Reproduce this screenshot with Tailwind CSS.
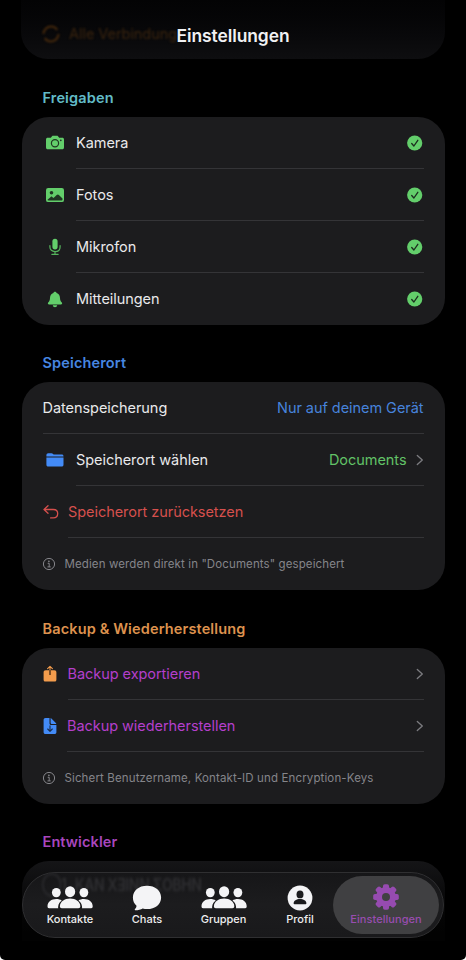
<!DOCTYPE html>
<html lang="de">
<head>
<meta charset="utf-8">
<title>Einstellungen</title>
<script src="https://cdn.jsdelivr.net/npm/@tailwindcss/browser@4"></script>
</head>
<body class="bg-white">
<svg class="hidden">
  <symbol id="check" viewBox="0 0 16 16"><circle cx="7.7" cy="8" r="7.6" fill="#63ce6b"/><path d="M4.7 8.5l2.2 2.5 3.9-5.7" fill="none" stroke="#1c2b1e" stroke-width="1.3" stroke-linecap="round" stroke-linejoin="round"/></symbol>
  <symbol id="chev" viewBox="0 0 8 12"><path d="M1.3 1.4l5 4.6-5 4.6" fill="none" stroke="#7c7c80" stroke-width="1.3" stroke-linecap="round" stroke-linejoin="round"/></symbol>
  <symbol id="info" viewBox="0 0 14 14"><circle cx="7" cy="7" r="5.6" fill="none" stroke="#85858a" stroke-width="1"/><circle cx="6.9" cy="4.3" r=".85" fill="#85858a"/><path d="M5.7 6.3h1.5v3.5M5.5 9.9h3.2" fill="none" stroke="#85858a" stroke-width="1"/></symbol>
  <symbol id="group" viewBox="0 0 46 22"><g fill="#f4f4f6"><ellipse cx="9.3" cy="6.6" rx="4.4" ry="4.7"/><ellipse cx="36.9" cy="6.6" rx="4.4" ry="4.7"/><path d="M.5 20.2C.5 15.8 4.5 13 9.3 13c2.2 0 4 .5 5.4 1.5-1.9 1.4-3.3 3.3-3.6 6.5 0 .6 0 1 .2 1.2H2C1 22.2.5 21.5.5 20.2zM45.7 20.2c0-4.4-4-7.2-8.8-7.2-2.2 0-4 .5-5.4 1.5 1.9 1.4 3.3 3.3 3.6 6.5 0 .6 0 1-.2 1.2h9.3c1 0 1.5-.7 1.5-2z"/><ellipse cx="23.1" cy="5.7" rx="5.1" ry="5.5"/><path d="M12.9 20.3c0-4.4 4.6-7.7 10.2-7.7s10.2 3.3 10.2 7.7c0 1.3-.6 1.9-1.9 1.9H14.8c-1.3 0-1.9-.6-1.9-1.9z"/></g></symbol>
</svg>
<div class="relative h-[960px] w-[466px] overflow-hidden rounded-b-[5px] bg-black px-[21.5px] font-['Inter','Liberation_Sans',sans-serif] text-[14.5px] tracking-[-.05px] text-[#e9e9eb]">

  <header class="relative -mx-[.5px] h-[59px] rounded-b-[27px] bg-linear-to-b from-[#030304] to-[#0e0e10]">
    <div class="flex items-center gap-[8px] pt-[24px] pl-[20px] leading-[18px] text-[#3a240e] blur-[1.3px]">
      <svg class="size-[20px]" viewBox="0 0 20 20" fill="none" stroke="#46290c" stroke-width="2"><circle cx="10" cy="10" r="7.5" stroke-dasharray="19 4.5"/></svg>
      <span>Alle Verbindung</span>
    </div>
    <h1 class="absolute inset-x-0 top-[24px] text-center text-[17.4px] leading-[24px] font-semibold tracking-[-.05px] text-[#f1f1f3]">Einstellungen</h1>
  </header>

  <main>
    <h2 class="flex h-[58px] items-center pt-[19px] pl-[21px] font-semibold tracking-[.14px] text-[#62bbc7]">Freigaben</h2>
    <section class="rounded-[27px] bg-[#1c1c1e] px-[21px]">
      <div class="flex h-[52px]">
        <span class="flex w-[33.5px] items-center pl-[2px]"><svg class="h-[16px] w-[20px]" viewBox="0 0 20 16"><path d="M3 2.8h2.8l1.2-1.6C7.3.8 7.6.7 8 .7h4c.4 0 .7.1 1 .5l1.2 1.6H17c1.4 0 2 .6 2 2v7.5c0 1.4-.6 2-2 2H3c-1.4 0-2-.6-2-2V4.8c0-1.4.6-2 2-2z" fill="#63ce6b"/><circle cx="10" cy="8.3" r="3.6" fill="none" stroke="#203623" stroke-width="1.2"/><circle cx="15.8" cy="5.3" r=".9" fill="#203623"/></svg></span>
        <div class="flex flex-1 items-center justify-between border-b border-[#343437]"><span class="pt-[1px]">Kamera</span><svg class="mr-[1px] size-[16px]"><use href="#check"/></svg></div>
      </div>
      <div class="flex h-[52px]">
        <span class="flex w-[33.5px] items-center pl-[2px]"><svg class="h-[16px] w-[20px]" viewBox="0 0 20 16"><rect x="1" y="1.1" width="18" height="14" rx="2.2" fill="#63ce6b"/><circle cx="6.5" cy="5.8" r="1.8" fill="#203623"/><path d="M2.5 12.8l3.2-2.9c.5-.4 1-.4 1.5 0l1.3 1 3.2-3c.8-.7 1.5-.7 2.2 0l3.6 3.5v1.2c0 .7-.4 1-1 1h-13c-.7 0-1-.3-1-.8z" fill="#203623"/></svg></span>
        <div class="flex flex-1 items-center justify-between border-b border-[#343437]"><span class="pt-[1px]">Fotos</span><svg class="mr-[1px] size-[16px]"><use href="#check"/></svg></div>
      </div>
      <div class="flex h-[52px]">
        <span class="flex w-[33.5px] items-center pl-[6px]"><svg class="h-[18px] w-[12px]" viewBox="0 0 12 18"><rect x="3.4" y=".8" width="5.2" height="10.6" rx="2.6" fill="#63ce6b"/><path d="M.9 7.5v1.4c0 2.8 2.1 4.7 5.1 4.7s5.1-1.9 5.1-4.7V7.5M6 13.6v2.7M2.9 16.4h6.2" fill="none" stroke="#55b35c" stroke-width="1.2" stroke-linecap="round"/></svg></span>
        <div class="flex flex-1 items-center justify-between border-b border-[#343437]"><span class="pt-[1px]">Mikrofon</span><svg class="mr-[1px] size-[16px]"><use href="#check"/></svg></div>
      </div>
      <div class="flex h-[52px]">
        <span class="flex w-[33.5px] items-center pl-[4px]"><svg class="h-[17px] w-[16px]" viewBox="0 0 16 17"><path d="M8 .7c.9 0 1.5.6 1.6 1.3C11.8 2.7 12.9 4.5 13 7c.1 2.3.6 3.2 1.6 4.3.5.6.6 1 .5 1.4-.2.5-.6.7-1.2.7H2.1c-.6 0-1-.2-1.2-.7-.1-.4 0-.8.5-1.4C2.4 10.2 2.9 9.3 3 7c.1-2.5 1.2-4.3 3.4-5C6.5 1.3 7.1.7 8 .7zM5.8 14.3h4.4c-.1 1.2-1 2-2.2 2s-2.1-.8-2.2-2z" fill="#63ce6b"/></svg></span>
        <div class="flex flex-1 items-center justify-between"><span>Mitteilungen</span><svg class="mr-[1px] size-[16px]"><use href="#check"/></svg></div>
      </div>
    </section>

    <h2 class="flex h-[57px] items-center pt-[18px] pl-[21px] font-semibold tracking-[.14px] text-[#4786e1]">Speicherort</h2>
    <section class="rounded-[27px] bg-[#1c1c1e] px-[21px]">
      <div class="flex h-[52px] items-center justify-between border-b border-[#343437] pt-[1px]"><span>Datenspeicherung</span><span class="text-[#4783dc]">Nur auf deinem Gerät</span></div>
      <div class="flex h-[52px]">
        <span class="flex w-[33.5px] items-center pl-[2px]"><svg class="h-[16px] w-[20px]" viewBox="0 0 20 16"><path d="M1.4 3.2c0-1.3.6-2 1.9-2h3.2c.6 0 .9.2 1.3.5l.8.7h7.9c1.4 0 2 .6 2 1.9v.3H1.4zM1.4 5.6h17.1v7c0 1.4-.6 2-2 2H3.4c-1.4 0-2-.6-2-2z" fill="#438bf7"/></svg></span>
        <div class="flex flex-1 items-center border-b border-[#343437]"><span class="flex-1 pt-[1px]">Speicherort wählen</span><span class="mr-[9px] pt-[1px] text-[#62c267]">Documents</span><svg class="h-[12px] w-[8px]"><use href="#chev"/></svg></div>
      </div>
      <div class="flex h-[52px]">
        <span class="flex w-[25.5px] items-center"><svg class="-ml-[1px] h-[16px] w-[18px]" viewBox="0 0 18 16"><path d="M6 1.8L2 5.5l4 3.7M2.3 5.5H11.3c2.8 0 4.4 1.7 4.4 4.1s-1.6 4.3-4.4 4.3H8.6" fill="none" stroke="#d6504d" stroke-width="1.3" stroke-linecap="round" stroke-linejoin="round"/></svg></span>
        <div class="flex flex-1 items-center border-b border-[#343437] pt-[1px] text-[#d6504d]">Speicherort zurücksetzen</div>
      </div>
      <div class="flex h-[52px] items-center gap-[8.5px] text-[11.5px] tracking-[.11px] text-[#85858a]"><svg class="-ml-[.5px] size-[14px]"><use href="#info"/></svg><span class="pt-[1px]">Medien werden direkt in "Documents" gespeichert</span></div>
    </section>

    <h2 class="flex h-[58px] items-center pt-[19px] pl-[21px] font-semibold tracking-[.14px] text-[#dd924e]">Backup &amp; Wiederherstellung</h2>
    <section class="rounded-[27px] bg-[#1c1c1e] px-[21px]">
      <div class="flex h-[52px]">
        <span class="flex w-[25px] items-center"><svg class="-ml-[.5px] h-[18px] w-[16px]" viewBox="0 0 16 18"><path d="M3.8 5.2h8.4c1.5 0 2.2.7 2.2 2.2v7c0 1.5-.7 2.2-2.2 2.2H3.8c-1.5 0-2.2-.7-2.2-2.2v-7c0-1.5.7-2.2 2.2-2.2z" fill="#f39c4c"/><path d="M8 10V5" stroke="#402a18" stroke-width="2"/><path d="M8 10V1.5M5.6 3.7L8 1.3l2.4 2.4" fill="none" stroke="#f39c4c" stroke-width="1.1" stroke-linecap="round" stroke-linejoin="round"/><path d="M8 10V5" stroke="#563416" stroke-width="1"/></svg></span>
        <div class="flex flex-1 items-center justify-between border-b border-[#343437] text-[#b43fcc]"><span class="pt-[1px]">Backup exportieren</span><svg class="h-[12px] w-[8px]"><use href="#chev"/></svg></div>
      </div>
      <div class="flex h-[52px]">
        <span class="flex w-[24.5px] items-center"><svg class="-ml-[.5px] h-[18px] w-[16px]" viewBox="0 0 16 18"><path d="M3.6 1h3.9v5.2c0 1.2.6 1.8 1.8 1.8h5.1v7c0 1.4-.7 2.1-2.1 2.1H3.7c-1.4 0-2.1-.7-2.1-2.1V3.1C1.6 1.7 2.3 1 3.6 1zM8.6 1.1c.4.1.7.3 1 .6l4 4.1c.4.3.6.7.7 1.1H9.4c-.5 0-.8-.3-.8-.8z" fill="#438bf7"/><path d="M8 8.8v5.3M5.7 12L8 14.3l2.3-2.3" fill="none" stroke="#182c4c" stroke-width="1.1" stroke-linecap="round" stroke-linejoin="round"/></svg></span>
        <div class="flex flex-1 items-center justify-between border-b border-[#343437] text-[#b43fcc]"><span class="pt-[1px]">Backup wiederherstellen</span><svg class="h-[12px] w-[8px]"><use href="#chev"/></svg></div>
      </div>
      <div class="flex h-[52px] items-center gap-[8.5px] text-[11.5px] tracking-[.13px] text-[#85858a]"><svg class="-ml-[.5px] size-[14px]"><use href="#info"/></svg><span class="pt-[1px]">Sichert Benutzername, Kontakt-ID und Encryption-Keys</span></div>
    </section>

    <h2 class="flex h-[57px] items-center pt-[18px] pl-[21px] font-semibold tracking-[.1px] text-[#a846bd]">Entwickler</h2>
    <section class="h-[80px] rounded-t-[27px] bg-linear-to-b from-[#151517] to-[#020202] to-90%"></section>
  </main>

  <nav class="absolute top-[872px] left-[22px] flex h-[66px] w-[422px] items-center overflow-hidden rounded-full border border-[#2f2f31] bg-linear-to-b from-[#161618] via-[#1c1c1e] to-[#19191b] pl-[8px] text-[11px] leading-[14px] font-medium tracking-[-.03px] text-[#eeeeef]">
    <div class="absolute top-[5px] left-[19px] flex scale-y-125 items-center gap-[8px] text-[14px] font-semibold tracking-[-.35px] text-[#2f2f32] blur-[1.2px]" aria-hidden="true"><span>◯1</span><span>KAN XƎINN ΣOBHN</span></div>
    <a class="relative flex w-[78px] shrink-0 flex-col items-center"><svg class="h-[24px] w-[46px]"><use href="#group"/></svg><span class="mt-[3px]">Kontakte</span></a>
    <a class="relative flex w-[76px] shrink-0 flex-col items-center"><svg class="h-[26px] w-[30px]" viewBox="0 0 30 26"><path d="M15 .7c8.2 0 14.1 4.9 14.1 11.7S23.2 24.1 15 24.1c-1.6 0-3-.2-4.3-.6-1.8 1-4.7 1.8-7.1 1.8-.9 0-1.2-.7-.6-1.3.9-.9 1.6-2.2 1.5-3.3C2.2 18.6.9 15.8.9 12.4.9 5.6 6.8.7 15 .7z" fill="#f4f4f6"/></svg><span class="mt-[1px]">Chats</span></a>
    <a class="relative flex w-[77px] shrink-0 flex-col items-center"><svg class="h-[24px] w-[46px]"><use href="#group"/></svg><span class="mt-[3px]">Gruppen</span></a>
    <a class="relative flex w-[76px] shrink-0 flex-col items-center"><svg class="size-[26px]" viewBox="0 0 26 26"><circle cx="13" cy="13" r="12.4" fill="#f4f4f6"/><ellipse cx="13" cy="9.4" rx="3.5" ry="3.9" fill="#1c1c1e"/><path d="M6.6 18.3c0-2.5 2.9-4.3 6.4-4.3s6.4 1.8 6.4 4.3c0 .6-.3.9-.9.9h-11c-.6 0-.9-.3-.9-.9z" fill="#1c1c1e"/></svg><span class="mt-[1px]">Profil</span></a>
    <a class="relative -ml-[5px] flex h-[58px] w-[106px] shrink-0 flex-col items-center rounded-full bg-[#404042] pt-[8px] tracking-[.05px] text-[#984db0]"><svg class="size-[26px]" viewBox="-13 -13 26 26"><g fill="#964bb0"><g id="teeth"><rect x="-3" y="-12.8" width="6" height="25.6" rx="1.8"/><rect x="-12.8" y="-3" width="25.6" height="6" rx="1.8"/></g><use href="#teeth" transform="rotate(45)"/><circle r="10"/></g><circle r="4" fill="#404042"/></svg><span class="mt-[2px]">Einstellungen</span></a>
  </nav>
</div>
</body>
</html>
